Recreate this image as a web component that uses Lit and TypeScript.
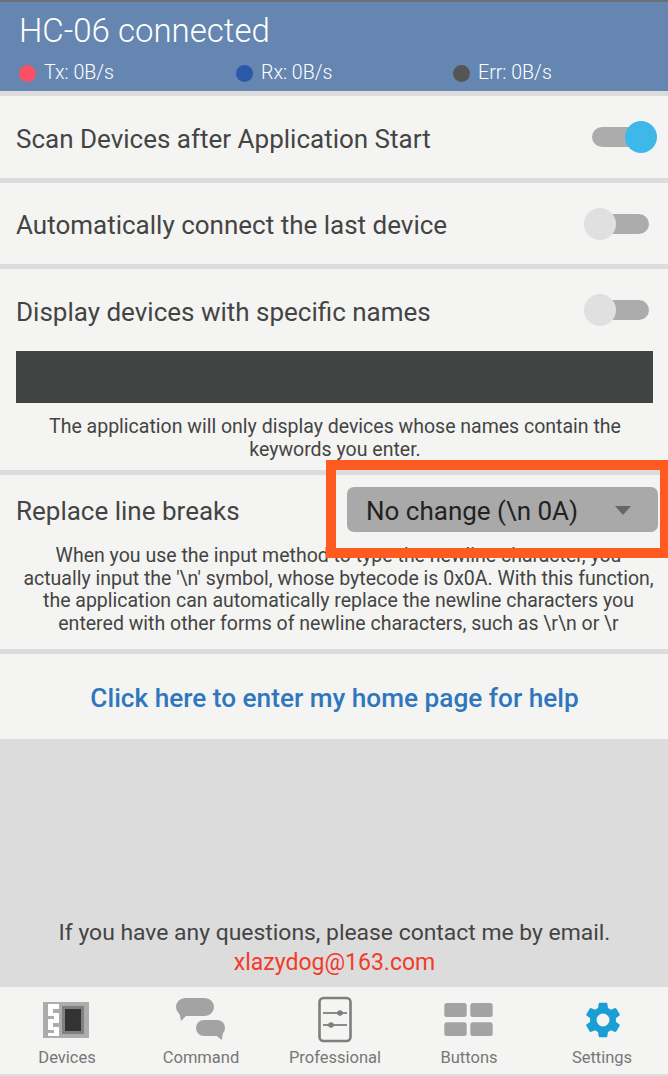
import { LitElement, html, css, svg } from 'lit';
import { customElement } from 'lit/decorators.js';

const tabs = [
  {
    label: 'Devices',
    icon: svg`<rect x="2" y="2" width="46" height="36" fill="#acacac"/>
      <rect x="21" y="6" width="22" height="28" fill="#808080"/>
      <rect x="24" y="9" width="16" height="22" fill="#333"/>
      <rect x="7" y="4" width="11" height="32" fill="#fff"/>
      <path d="M12 9h6v4h-6zM7 16h6v3H7zM12 23h6v4h-6zM7 30h6v3H7z" fill="#acacac"/>`,
  },
  {
    label: 'Command',
    icon: svg`<rect x="1" y="-2" width="38" height="18" rx="9" fill="#a3a3a3"/>
      <path d="M4 11l2 10 8-8z" fill="#a3a3a3"/>
      <rect x="21" y="20" width="29" height="16" rx="8" fill="#a3a3a3"/>
      <path d="M48 30l-1 10-8-6z" fill="#a3a3a3"/>`,
  },
  {
    label: 'Professional',
    icon: svg`<rect x="10.5" y="-2" width="31" height="43" rx="4" fill="none" stroke="#7e7e7e" stroke-width="2.6"/>
      <path d="M14 13h24M14 25h24" stroke="#8a8a8a" stroke-width="2"/>
      <circle cx="31" cy="13" r="2.8" fill="#7e7e7e"/><circle cx="22" cy="25" r="2.8" fill="#7e7e7e"/>`,
  },
  {
    label: 'Buttons',
    icon: svg`<rect x="1.3" y="3" width="22.4" height="14" rx="2.5" fill="#a3a3a3"/>
      <rect x="27.3" y="3" width="22.4" height="14" rx="2.5" fill="#a3a3a3"/>
      <rect x="1.3" y="22.3" width="22.4" height="13.7" rx="2.5" fill="#a3a3a3"/>
      <rect x="27.3" y="22.3" width="22.4" height="13.7" rx="2.5" fill="#a3a3a3"/>`,
  },
  {
    label: 'Settings',
    icon: svg`<g transform="translate(5.4 -1.6) scale(1.8)"><path fill="#1b9dd6" d="M19.14 12.94c.04-.3.06-.61.06-.94s-.02-.64-.07-.94l2.03-1.58a.49.49 0 0 0 .12-.61l-1.92-3.32a.49.49 0 0 0-.59-.22l-2.39.96a7 7 0 0 0-1.62-.94l-.36-2.54a.48.48 0 0 0-.48-.41h-3.84a.48.48 0 0 0-.47.41l-.36 2.54c-.59.24-1.13.57-1.62.94l-2.39-.96a.49.49 0 0 0-.59.22L2.74 8.87a.48.48 0 0 0 .12.61l2.03 1.58c-.05.3-.09.63-.09.94s.02.64.07.94l-2.03 1.58a.49.49 0 0 0-.12.61l1.92 3.32c.12.22.37.29.59.22l2.39-.96c.5.38 1.03.7 1.62.94l.36 2.54c.05.24.24.41.48.41h3.84c.24 0 .44-.17.47-.41l.36-2.54c.59-.24 1.13-.56 1.62-.94l2.39.96c.22.08.47 0 .59-.22l1.92-3.32a.48.48 0 0 0-.12-.61zM12 15.6a3.6 3.6 0 1 1 0-7.2 3.6 3.6 0 0 1 0 7.2z"/></g>`,
  },
];

@customElement('app-root')
export class AppRoot extends LitElement {
  static styles = css`
    :host {
      display: block;
      width: 668px;
      height: 1076px;
      font-family: Roboto, 'Noto Sans', sans-serif;
      color: #444;
      background: #dcdcdc;
      overflow: hidden;
      position: relative;
    }
    .page {
      display: flex;
      flex-direction: column;
      height: 1076px;
    }
    .header {
      height: 91px;
      box-sizing: border-box;
      background: #6486b0;
      border-top: 2px solid #6a6f78;
      padding: 10px 19px 0;
      color: #fff;
      margin-bottom: 5px;
    }
    .title {
      font-size: 33px;
      line-height: 38px;
      font-weight: 300;
    }
    .stats {
      display: grid;
      grid-template-columns: 217px 217px 1fr;
      margin-top: 13px;
    }
    .stat {
      display: flex;
      align-items: center;
      gap: 8px;
      font-size: 19.6px;
      line-height: 20px;
      font-weight: 300;
    }
    .dot {
      width: 17px;
      height: 17px;
      border-radius: 50%;
    }
    .section {
      background: #f4f4f2;
      margin-bottom: 5px;
    }
    .row {
      display: flex;
      align-items: center;
      justify-content: space-between;
      padding-left: 16px;
      font-size: 26px;
    }
    .row > span {
      padding-top: 3px;
    }
    .r1 { height: 82px; }
    .r2 { height: 81px; }
    .r3 { height: 82px; }
    .switch {
      position: relative;
      width: 58px;
      height: 20px;
      border-radius: 10px;
      background: #acacac;
      margin-right: 19px;
    }
    .knob {
      position: absolute;
      top: -6px;
      left: -7px;
      width: 32px;
      height: 32px;
      border-radius: 50%;
      background: #e0e0e0;
    }
    .switch.on {
      margin-right: 18px;
    }
    .switch.on .knob {
      left: 33px;
      background: #3eb8e8;
    }
    .bar {
      height: 52px;
      margin: 0 15px 0 16px;
      background: #424443;
    }
    .note {
      text-align: center;
      font-size: 19.5px;
    }
    .n1 {
      line-height: 23px;
      padding: 12px 9px 9px 11px;
    }
    .n2 {
      line-height: 22.5px;
      padding: 1px 12.5px 14px 21.5px;
    }
    .select-row {
      height: 69px;
      display: flex;
      align-items: center;
      justify-content: space-between;
      padding: 0 10px 0 16px;
      font-size: 26px;
    }
    .select-row > span {
      padding-top: 3px;
    }
    .select {
      width: 311px;
      height: 45px;
      box-sizing: border-box;
      border-radius: 7px;
      background: #a9a9a9;
      color: #222;
      font-size: 26px;
      display: flex;
      align-items: center;
      justify-content: space-between;
      padding: 2px 27px 0 19px;
    }
    .caret {
      width: 0;
      height: 0;
      border-left: 8px solid transparent;
      border-right: 8px solid transparent;
      border-top: 9px solid #666;
    }
    .highlight {
      position: absolute;
      left: 326px;
      top: 460px;
      width: 342px;
      height: 98px;
      box-sizing: border-box;
      border: 10px solid #ff5a1f;
      border-right-width: 8px;
    }
    .help {
      height: 85px;
      display: flex;
      align-items: center;
      justify-content: center;
      font-size: 26.2px;
      font-weight: 500;
      color: #2f77bd;
      margin-bottom: 0;
      padding: 2px 0 0 1px;
      box-sizing: border-box;
    }
    .spacer {
      flex: 1;
    }
    .contact {
      text-align: center;
      font-size: 22.9px;
      line-height: 30px;
      margin-bottom: 9px;
      padding-left: 1px;
    }
    .mail {
      color: #f23a2a;
      font-size: 23px;
    }
    .tabs {
      height: 87px;
      box-sizing: border-box;
      background: #f4f4f2;
      display: grid;
      grid-template-columns: 134px 134px 134px 134px 132px;
      margin-bottom: 2px;
    }
    .tab {
      display: flex;
      flex-direction: column;
      align-items: center;
      font-size: 16.5px;
      line-height: 19px;
      color: #777;
      padding-top: 13px;
    }
    .tab svg {
      width: 50px;
      height: 44px;
      overflow: visible;
      margin: 0 2px 4px 0;
    }
  `;

  render() {
    return html`
      <div class="page">
        <div class="header">
          <div class="title">HC-06 connected</div>
          <div class="stats">
            <div class="stat"><span class="dot" style="background:#f95064"></span>Tx: 0B/s</div>
            <div class="stat"><span class="dot" style="background:#2a59a8"></span>Rx: 0B/s</div>
            <div class="stat"><span class="dot" style="background:#555"></span>Err: 0B/s</div>
          </div>
        </div>
        <div class="section row r1">
          <span>Scan Devices after Application Start</span>
          <div class="switch on"><div class="knob"></div></div>
        </div>
        <div class="section row r2">
          <span>Automatically connect the last device</span>
          <div class="switch"><div class="knob"></div></div>
        </div>
        <div class="section">
          <div class="row r3">
            <span>Display devices with specific names</span>
            <div class="switch"><div class="knob"></div></div>
          </div>
          <div class="bar"></div>
          <div class="note n1">The application will only display devices whose names contain the keywords you enter.</div>
        </div>
        <div class="section">
          <div class="select-row">
            <span>Replace line breaks</span>
            <div class="select"><span>No change (\\n 0A)</span><span class="caret"></span></div>
          </div>
          <div class="note n2">When you use the input method to type the newline character, you actually input the '\\n' symbol, whose bytecode is 0x0A. With this function, the application can automatically replace the newline characters you entered with other forms of newline characters, such as \\r\\n or \\r</div>
        </div>
        <div class="section help">Click here to enter my home page for help</div>
        <div class="spacer"></div>
        <div class="contact">
          <div>If you have any questions, please contact me by email.</div>
          <div class="mail">xlazydog@163.com</div>
        </div>
        <div class="tabs">
          ${tabs.map(
            (t) => html`<div class="tab">
              <svg viewBox="0 0 50 44">${t.icon}</svg>
              <span>${t.label}</span>
            </div>`
          )}
        </div>
      </div>
      <div class="highlight"></div>
    `;
  }
}
